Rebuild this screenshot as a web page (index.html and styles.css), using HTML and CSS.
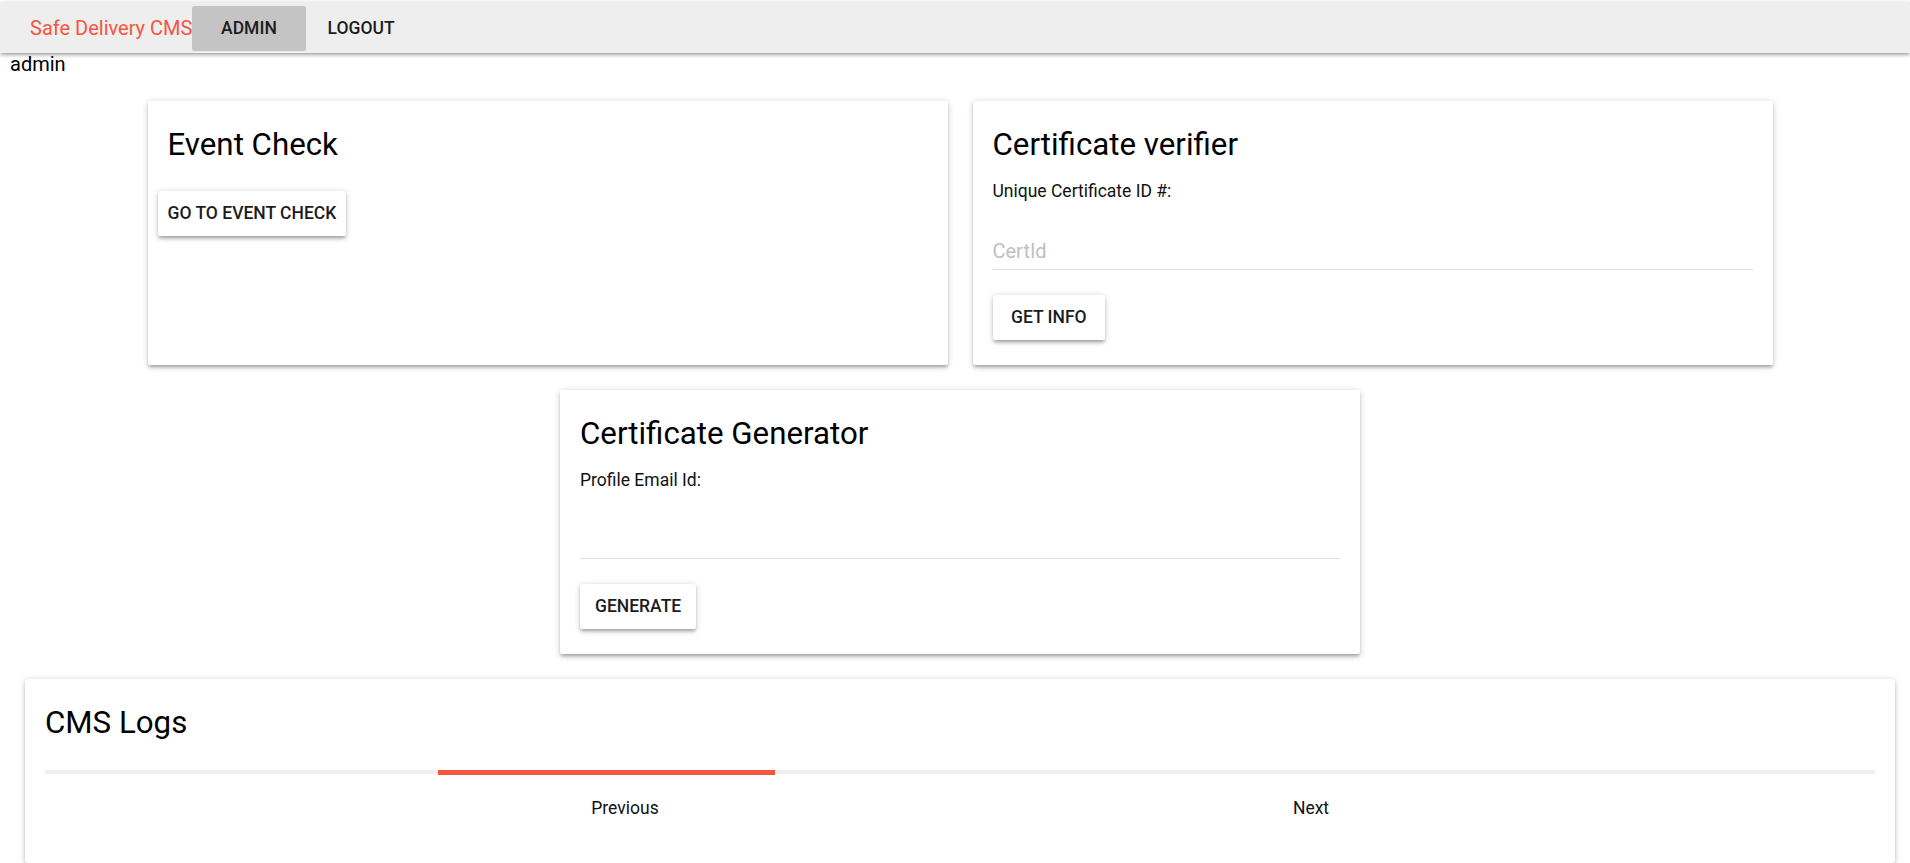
FILE: index.html
```html
<!DOCTYPE html>
<html lang="en">
<head>
<meta charset="utf-8">
<title>Safe Delivery CMS</title>
<link rel="stylesheet" href="styles.css">
</head>
<body>
<header class="topbar">
  <span class="brand">Safe Delivery CMS</span>
  <a class="nav-item nav-active">ADMIN</a>
  <a class="nav-item nav-logout">LOGOUT</a>
</header>
<div class="user">admin</div>
<main class="wrap">
  <div class="row">
    <section class="card">
      <h2 class="card-title">Event Check</h2>
      <button class="btn btn-event">GO TO EVENT CHECK</button>
    </section>
    <section class="card">
      <h2 class="card-title">Certificate verifier</h2>
      <label class="field-label">Unique Certificate ID #:</label>
      <input class="field-input" type="text" placeholder="CertId">
      <button class="btn btn-info">GET INFO</button>
    </section>
  </div>
  <div class="row">
    <section class="card">
      <h2 class="card-title">Certificate Generator</h2>
      <label class="field-label">Profile Email Id:</label>
      <input class="field-input" type="text">
      <button class="btn btn-gen">GENERATE</button>
    </section>
  </div>
  <section class="card card-logs">
    <h2 class="card-title">CMS Logs</h2>
    <div class="tab-bar"><span class="tab-indicator"></span></div>
    <div class="tabs">
      <span class="tab">Previous</span>
      <span class="tab">Next</span>
    </div>
  </section>
</main>
</body>
</html>
```
FILE: styles.css
```css
* { box-sizing: border-box; }
html, body { margin: 0; padding: 0; background: #fff; }
body {
  font-family: Roboto, "Liberation Sans", Arial, sans-serif;
  color: #000;
  overflow: hidden;
}
.topbar {
  margin-top: 2px;
  height: 51px;
  background: #eeeeee;
  display: flex;
  align-items: center;
  padding-left: 30px;
  box-shadow: 0 2.5px 2.5px 0 rgba(0,0,0,0.14), 0 3.75px 1.25px -2.5px rgba(0,0,0,0.12), 0 1.25px 6.25px 0 rgba(0,0,0,0.2);
  position: relative;
  z-index: 2;
}
.brand {
  font-size: 20px;
  color: #f6553f;
  line-height: 24px;
}
.nav-item {
  font-size: 17.5px;
  font-weight: 500;
  color: #1c1c1c;
  height: 45px;
  line-height: 45px;
  margin-top: 2px;
}
.nav-active {
  background: #c4c4c4;
  border-radius: 2.5px;
  padding: 0 28.7px;
}
.nav-logout { padding: 0 22px; }
.user {
  padding-left: 10px;
  font-size: 20px;
  line-height: 22.5px;
  height: 23.5px;
}
.wrap {
  margin-left: 10px;
  width: 1900px;
  padding-top: 24.5px;
  display: flex;
  flex-direction: column;
  gap: 25px;
}
.row {
  display: flex;
  justify-content: center;
  gap: 25px;
}
.card {
  width: 800px;
  background: #fff;
  border-radius: 2.5px;
  padding: 25px 20px 25px;
  display: flex;
  flex-direction: column;
  align-items: flex-start;
  box-shadow: 0 2.5px 2.5px 0 rgba(0,0,0,0.14), 0 3.75px 1.25px -2.5px rgba(0,0,0,0.12), 0 1.25px 6.25px 0 rgba(0,0,0,0.2);
}
.card-title {
  margin: 0;
  font-size: 31.25px;
  font-weight: 400;
  line-height: 37.8px;
  color: #000;
}
.field-label {
  margin-top: 17.7px;
  font-size: 17.5px;
  line-height: 21px;
  color: #111;
}
.field-input {
  margin-top: 30.5px;
  width: 100%;
  height: 37px;
  border: 0;
  border-bottom: 1px solid #dedede;
  padding: 0;
  font-family: inherit;
  font-size: 20px;
  color: #000;
  background: transparent;
  outline: none;
}
.field-input::placeholder { color: #bfbfbf; }
.btn {
  font-family: inherit;
  font-size: 17.5px;
  font-weight: 500;
  color: #1c1c1c;
  background: #fff;
  border: 0;
  border-radius: 2.5px;
  height: 45px;
  line-height: 45px;
  padding: 0 20px;
  box-shadow: 0 2.5px 2.5px 0 rgba(0,0,0,0.14), 0 3.75px 1.25px -2.5px rgba(0,0,0,0.12), 0 1.25px 6.25px 0 rgba(0,0,0,0.2);
}
.btn-event {
  margin-top: 27.2px;
  margin-left: -10px;
  padding: 0 10px;
}
.btn-info { margin-top: 25px; padding: 0 18.5px; }
.btn-gen { margin-top: 25px; padding: 0 15px; }
.card-logs {
  width: auto;
  margin: 0 15px;
  height: 184px;
  align-items: stretch;
}
.tab-bar {
  margin-top: 28.2px;
  height: 5px;
  background: #eeeeee;
  position: relative;
}
.tab-indicator {
  position: absolute;
  left: 393px;
  top: 0;
  width: 337px;
  height: 5px;
  background: #f6553f;
}
.tabs {
  margin-top: 4px;
  padding-left: 237px;
  display: grid;
  grid-template-columns: 686px 686px;
  height: 60px;
}
.tab {
  text-align: center;
  font-size: 17.5px;
  line-height: 60px;
  color: #111;
}
```
